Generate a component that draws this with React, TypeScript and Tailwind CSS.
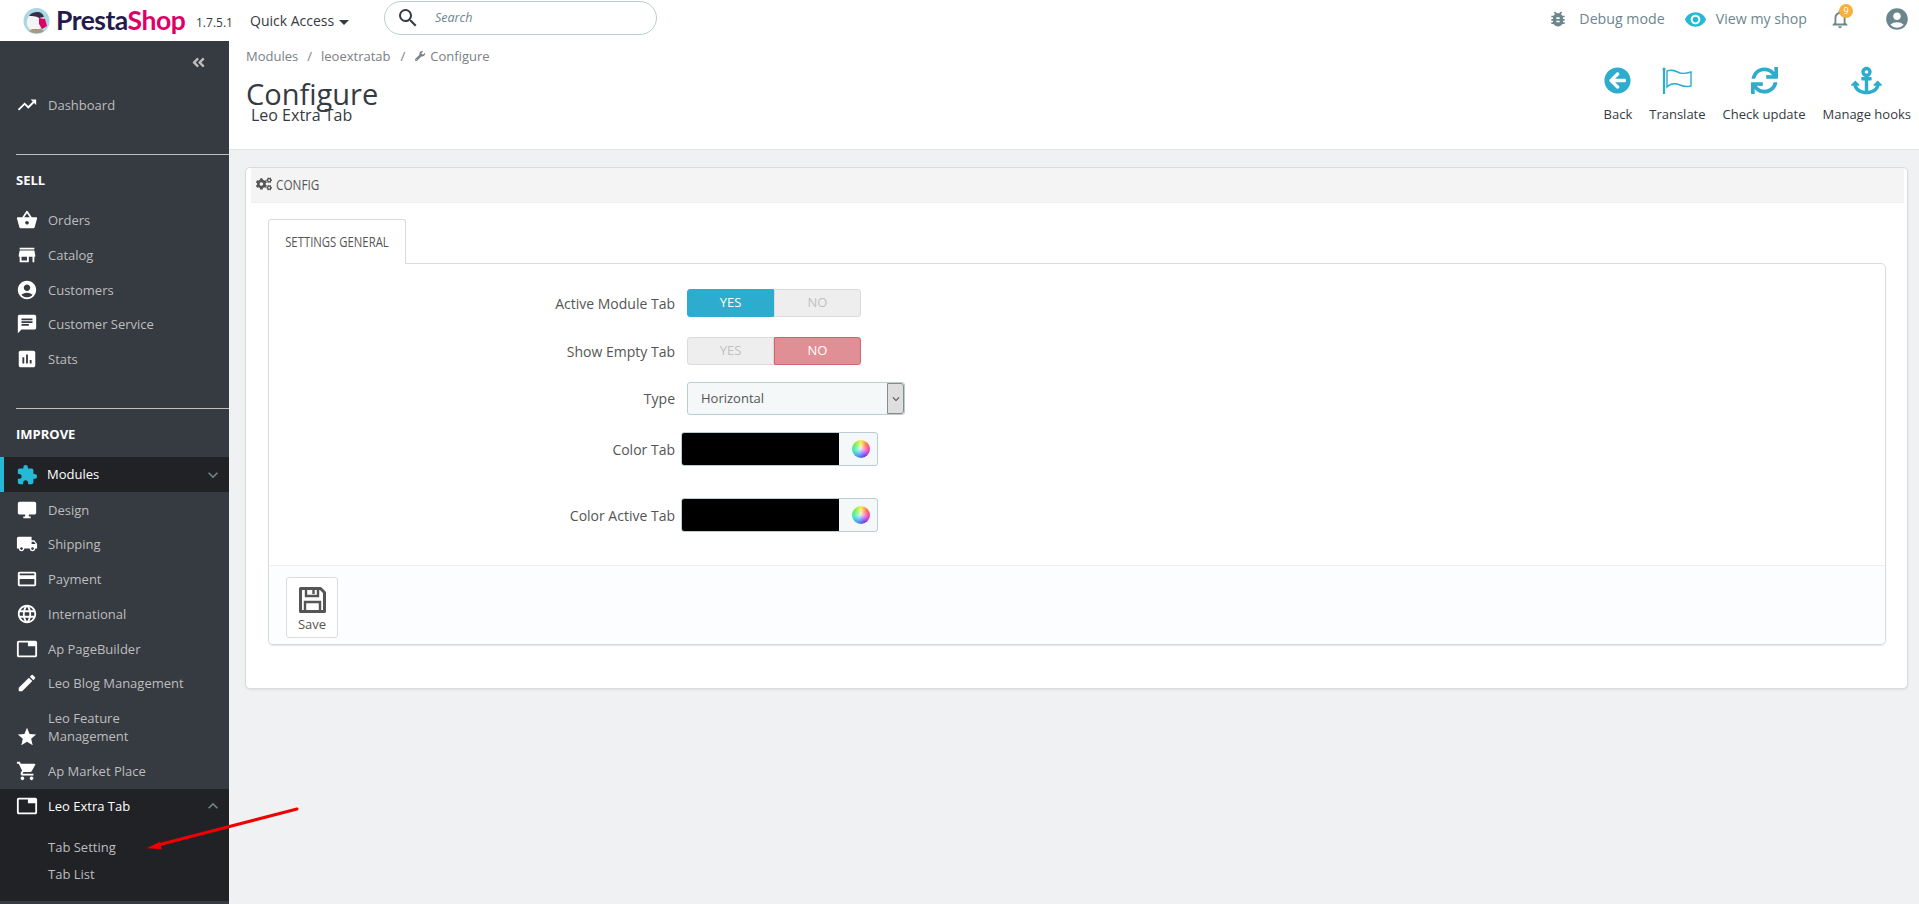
import type { ReactNode } from "react"
import {
  MdAccountCircle,
  MdAssessment,
  MdBugReport,
  MdChat,
  MdCreate,
  MdDesktopWindows,
  MdExpandLess,
  MdExpandMore,
  MdExtension,
  MdLanguage,
  MdLocalShipping,
  MdNotificationsNone,
  MdPayment,
  MdSearch,
  MdShoppingBasket,
  MdShoppingCart,
  MdStar,
  MdStore,
  MdTab,
  MdTrendingUp,
  MdVisibility,
} from "react-icons/md"
import { FaAnchor, FaAngleDoubleLeft, FaArrowCircleLeft, FaCogs, FaSync, FaWrench } from "react-icons/fa"

function NavItem({ icon, label, tall }: { icon: ReactNode; label: ReactNode; tall?: boolean }) {
  return (
    <div className={`flex items-center pl-[16px] text-[13px] leading-[18px] text-[#bebebe] ${tall ? "h-[53.5px]" : "h-[34.7px]"}`}>
      <span className={`w-[32px] shrink-0 text-[22px] text-white ${tall ? "self-end pb-[6px]" : ""}`}>{icon}</span>
      <span>{label}</span>
    </div>
  )
}

function SectionTitle({ children }: { children: ReactNode }) {
  return (
    <div className="ml-[16px] border-t border-[#bebebe] pt-[16px] pb-[14px] text-[13px] leading-[18px] font-bold text-white">
      {children}
    </div>
  )
}

function Sidebar() {
  return (
    <aside className="flex h-[863px] w-[229px] shrink-0 flex-col bg-[#363a41]">
      <div className="flex h-[41px] items-center justify-end pt-[2px] pr-[23px] text-[15px] text-[#bebebe]">
        <FaAngleDoubleLeft />
      </div>
      <div className="mb-[32px] h-[40px] pt-[6px]">
        <NavItem icon={<MdTrendingUp />} label="Dashboard" />
      </div>
      <SectionTitle>SELL</SectionTitle>
      <NavItem icon={<MdShoppingBasket />} label="Orders" />
      <NavItem icon={<MdStore />} label="Catalog" />
      <NavItem icon={<MdAccountCircle />} label="Customers" />
      <NavItem icon={<MdChat />} label="Customer Service" />
      <NavItem icon={<MdAssessment />} label="Stats" />
      <div className="h-[32px]" />
      <SectionTitle>IMPROVE</SectionTitle>
      <div className="flex h-[35px] items-center border-l-4 border-[#25b9d7] bg-[#202226] pr-[6px] pl-[12px] text-[13px] text-white">
        <MdExtension className="w-[31px] shrink-0 pr-[9px] text-[22px] text-[#25b9d7]" />
        <span className="flex-1">Modules</span>
        <MdExpandMore className="text-[20px] text-[#6c868e]" />
      </div>
      <NavItem icon={<MdDesktopWindows />} label="Design" />
      <NavItem icon={<MdLocalShipping />} label="Shipping" />
      <NavItem icon={<MdPayment />} label="Payment" />
      <NavItem icon={<MdLanguage />} label="International" />
      <NavItem icon={<MdTab />} label="Ap PageBuilder" />
      <NavItem icon={<MdCreate />} label="Leo Blog Management" />
      <NavItem icon={<MdStar />} tall label={<>Leo Feature<br />Management</>} />
      <NavItem icon={<MdShoppingCart />} label="Ap Market Place" />
      <div className="bg-[#202226] pb-[13px] text-[13px]">
        <div className="flex h-[35px] items-center pr-[6px] pl-[16px] text-white">
          <MdTab className="w-[32px] shrink-0 pr-[10px] text-[22px]" />
          <span className="flex-1">Leo Extra Tab</span>
          <MdExpandLess className="text-[20px] text-[#6c868e]" />
        </div>
        <div className="pt-[10px] pl-[48px] text-[#bebebe]">
          <div className="h-[27px] leading-[27px]">Tab Setting</div>
          <div className="h-[27px] leading-[27px]">Tab List</div>
        </div>
      </div>
    </aside>
  )
}

function Logo() {
  return (
    <svg width="27" height="28" viewBox="0 0 27 28" className="shrink-0">
      <circle cx="13.5" cy="14" r="13" fill="#a9d8e2" />
      <path d="M4 18c-1-7 3-12 9-12 4 0 7 2 8 5l-3 9-3 5c-5 0-9-2-11-7z" fill="#f4f4f2" />
      <path d="M6 9c2-3 5-4 8-4 4 0 6 2 7 5l-5 1c-3-2-7-2-10-2z" fill="#34304a" />
      <path d="M16 11l6 1 2 7-5 3-3-5z" fill="#df0067" />
      <path d="M6 24c4 3 11 3 15 0l-3-2H9z" fill="#a89a7e" />
    </svg>
  )
}

function HeaderBar() {
  return (
    <header className="flex h-[41px] items-center bg-white text-[#6c868e]">
      <div className="ml-[23px] flex w-[161px] items-center gap-[6px] font-['Lato',sans-serif] text-[26.5px] leading-none font-bold tracking-[-0.5px]">
        <Logo />
        <span className="whitespace-nowrap">
          <span className="text-[#251b4b]">Presta</span>
          <span className="text-[#df0067]">Shop</span>
        </span>
      </div>
      <span className="ml-[12px] w-[54px] pt-[4px] text-[12px] text-[#363a41]">1.7.5.1</span>
      <span className="flex w-[134px] items-center text-[14px] text-[#363a41]">
        Quick Access
        <span className="mt-[3px] ml-[5px] h-0 w-0 border-x-[5px] border-t-[5px] border-x-transparent border-t-[#363a41]" />
      </span>
      <div className="mb-[5px] flex h-[34px] w-[273px] items-center rounded-full border border-[#bbcdd2] pl-[11px]">
        <MdSearch className="text-[24px] text-[#363a41]" />
        <span className="ml-[15px] text-[12.5px] text-[#6c868e] italic">Search</span>
      </div>
      <div className="ml-auto flex items-center pb-[3px] text-[14.2px]">
        <MdBugReport className="text-[20px]" />
        <span className="ml-[11px]">Debug mode</span>
        <MdVisibility className="ml-[19px] text-[23px] text-[#25b9d7]" />
        <span className="ml-[9px]">View my shop</span>
        <span className="relative ml-[22px] text-[22px]">
          <MdNotificationsNone />
          <span className="absolute -top-[4px] left-[10px] flex h-[14px] w-[14px] items-center justify-center rounded-full bg-[#f5b13c] text-[9px] text-white">
            9
          </span>
        </span>
        <MdAccountCircle className="mr-[9px] ml-[33px] text-[26px]" />
      </div>
    </header>
  )
}

function HeadAction({ icon, label }: { icon: ReactNode; label: string }) {
  return (
    <div className="flex flex-col items-center">
      <div className="flex h-[34px] items-center text-[27px] text-[#2eacce]">{icon}</div>
      <div className="mt-[8px] text-[13px] leading-[18px] text-[#363a41]">{label}</div>
    </div>
  )
}

function PageHead() {
  return (
    <div className="flex h-[109px] border-b border-[#dfe3e5] bg-white pl-[17px] text-[#363a41]">
      <div className="flex-1 pt-[6px]">
        <div className="flex items-center text-[13px] leading-[18px] text-[#7a8084]">
          <span>Modules</span>
          <span className="mx-[9px]">/</span>
          <span>leoextratab</span>
          <span className="mx-[10px]">/</span>
          <FaWrench className="mr-[5px] text-[10px]" />
          <span>Configure</span>
        </div>
        <h1 className="mt-[11px] text-[29px] leading-[36px]">Configure</h1>
        <div className="mt-[-7px] ml-[5px] text-[16px] leading-[20px]">Leo Extra Tab</div>
      </div>
      <div className="mr-[8px] flex gap-[17px] pt-[22px]">
        <HeadAction icon={<FaArrowCircleLeft />} label="Back" />
        <HeadAction
          label="Translate"
          icon={
            <svg width="31" height="27" viewBox="0 0 31 27" fill="none" stroke="#2eacce" strokeWidth="1.4">
              <path d="M2 2v25" strokeWidth="2.2" />
              <circle cx="2" cy="2" r="1.6" fill="#2eacce" stroke="none" />
              <path d="M5 4c5-2 9 0 13 2 4 1 8 0 11-1v14c-4 1-7 1-11-1-5-2-9-2-13 2z" />
            </svg>
          }
        />
        <HeadAction icon={<FaSync />} label="Check update" />
        <HeadAction icon={<FaAnchor className="text-[31px]" />} label="Manage hooks" />
      </div>
    </div>
  )
}

function Toggle({ on }: { on: boolean }) {
  return (
    <div className="flex h-[28px] w-[174px] text-[13px]">
      <div
        className={`flex w-[87px] items-center justify-center rounded-l-[3px] border ${
          on ? "border-[#2eacce] bg-[#2eacce] text-white" : "border-[#dbdbdb] bg-[#eeeeee] text-[#c0c0c0]"
        }`}
      >
        YES
      </div>
      <div
        className={`flex w-[87px] items-center justify-center rounded-r-[3px] border ${
          on ? "border-[#dbdbdb] bg-[#eeeeee] text-[#c0c0c0]" : "border-[#d1656e] bg-[#e08f95] text-white"
        }`}
      >
        NO
      </div>
    </div>
  )
}

function ColorField() {
  return (
    <div className="-ml-[6px] flex h-[34px] w-[197px] overflow-hidden rounded-[3px] border border-[#bbcdd2] bg-[#f5f8f9]">
      <div className="w-[157px] bg-black" />
      <div className="flex flex-1 items-center justify-center pl-[5px]">
        <span className="h-[18px] w-[18px] rounded-full bg-[radial-gradient(circle,rgba(255,255,255,0.8)_0%,rgba(255,255,255,0)_60%),conic-gradient(#f5ee50,#ff6a50,#f040c0,#7040f0,#40a0f0,#40e8c0,#70f050,#f5ee50)]" />
      </div>
    </div>
  )
}

function FormRow({ label, className, children }: { label: string; className: string; children: ReactNode }) {
  return (
    <div className={`flex items-center ${className}`}>
      <label className="mr-[12px] w-[406px] text-right text-[14px] text-[#555555]">{label}</label>
      {children}
    </div>
  )
}

function ConfigPanel() {
  return (
    <section className="mt-[17px] mr-[11px] ml-[16px] h-[522px] rounded-[5px] border border-[#d9dcde] bg-white pr-[3px] pl-[5px] shadow-[0_1px_2px_rgba(0,0,0,0.08)]">
      <div className="flex h-[35px] items-center border-b border-[#eeeeee] bg-[#f4f4f4] pb-[2px] pl-[5px] text-[14px] text-[#555555]">
        <FaCogs className="mr-[4px] text-[16px]" />
        {/* the original heading font is condensed, none is installed */}
        <span className="origin-left scale-x-[0.84]">CONFIG</span>
      </div>
      <div className="mt-[16px] mr-[18px] ml-[17px]">
        <div className="-mb-px relative z-10 flex h-[45px] w-[138px] items-center justify-center rounded-t-[3px] border border-b-0 border-[#d9dcde] bg-white pb-[1px] text-[14px] whitespace-nowrap text-[#555555]">
          <span className="scale-x-[0.81]">SETTINGS GENERAL</span>
        </div>
        <div className="rounded-b-[5px] rounded-tr-[5px] border border-[#d9dcde] shadow-[0_1px_1px_rgba(0,0,0,0.1)]">
          <div className="h-[301px] overflow-hidden pt-[25px]">
            <FormRow label="Active Module Tab" className="h-[28px]">
              <Toggle on />
            </FormRow>
            <FormRow label="Show Empty Tab" className="mt-[20px] h-[28px]">
              <Toggle on={false} />
            </FormRow>
            <FormRow label="Type" className="mt-[17px] h-[33px]">
              <div className="flex h-[33px] w-[218px] items-stretch rounded-[3px] border border-[#bbcdd2] bg-[#f5f8f9] text-[13px] text-[#555555]">
                <span className="flex flex-1 items-center pl-[13px]">Horizontal</span>
                <span className="flex w-[17px] items-center justify-center rounded-r-[3px] border border-[#8a8a8a] bg-[#dedede]">
                  <MdExpandMore className="text-[14px]" />
                </span>
              </div>
            </FormRow>
            <FormRow label="Color Tab" className="mt-[17px] h-[34px]">
              <ColorField />
            </FormRow>
            <FormRow label="Color Active Tab" className="mt-[32px] h-[34px]">
              <ColorField />
            </FormRow>
          </div>
          <div className="flex h-[79px] items-start rounded-b-[5px] border-t border-[#eeeeee] bg-[#fcfdfe] pt-[11px] pl-[17px]">
            <div className="flex h-[61px] w-[52px] flex-col items-center rounded-[3px] border border-[#dddddd] bg-white pt-[9px] text-[13px] leading-[18px] text-[#555555]">
              <svg width="27" height="26" viewBox="0 0 27 26" fill="none" stroke="#555555">
                <path d="M1.5 1.5h20l4 4v19h-24z" strokeWidth="3" strokeLinejoin="round" />
                <path d="M7 2v7h12V2" strokeWidth="2.4" />
                <path d="M14.5 3v4" strokeWidth="2.4" />
                <path d="M6 24v-9h15v9" strokeWidth="2.4" />
              </svg>
              <span className="mt-[2px]">Save</span>
            </div>
          </div>
        </div>
      </div>
    </section>
  )
}

export default function App() {
  return (
    <div className="relative h-[904px] w-[1919px] overflow-hidden bg-[#eff1f2] font-['Open_Sans',sans-serif]">
      <HeaderBar />
      <div className="flex">
        <Sidebar />
        <main className="flex-1">
          <PageHead />
          <ConfigPanel />
        </main>
      </div>
      {/* red annotation arrow */}
      <svg className="absolute top-[800px] left-[140px]" width="165" height="56" viewBox="0 0 165 56">
        <path d="M157 9 L18 45" stroke="#f00000" strokeWidth="3" strokeLinecap="round" />
        <path d="M6.7 48.3 L20 41.7 L21.7 49.3 Z" fill="#f00000" />
      </svg>
    </div>
  )
}
